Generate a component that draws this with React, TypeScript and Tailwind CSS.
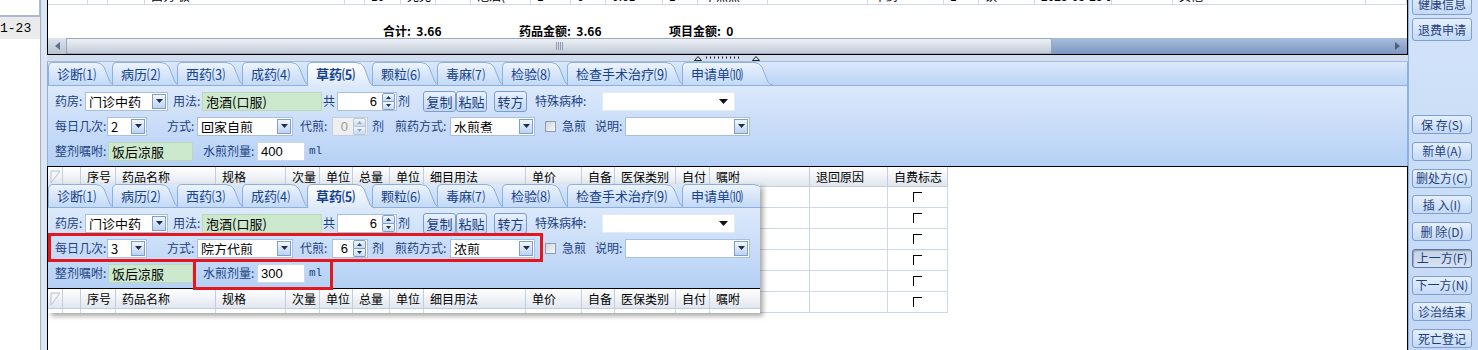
import clsx from "clsx";

const LABEL = "shrink-0 whitespace-nowrap text-[12px] leading-none text-[#1b3f80]";

type Vals = {
  times: string;
  mode: string;
  dai: string;
  daiOn: boolean;
  jian: string;
  amount: string;
};

const TABS = [
  { label: "诊断⑴", w: 64, cls: "w-[64px]" },
  { label: "病历⑵", w: 65, cls: "w-[65px]" },
  { label: "西药⑶", w: 65, cls: "w-[65px]" },
  { label: "成药⑷", w: 65, cls: "w-[65px]" },
  { label: "草药⑸", w: 65, cls: "w-[65px]", active: true },
  { label: "颗粒⑹", w: 65, cls: "w-[65px]" },
  { label: "毒麻⑺", w: 65, cls: "w-[65px]" },
  { label: "检验⑻", w: 65, cls: "w-[65px]" },
  { label: "检查手术治疗⑼", w: 115, cls: "w-[115px]" },
  { label: "申请单⑽", w: 88, cls: "w-[88px]" },
];

const COLS = [
  { t: "", cls: "w-[15px]" },
  { t: "", cls: "w-[18px]" },
  { t: "序号", cls: "w-[35px]" },
  { t: "药品名称", cls: "w-[100px]" },
  { t: "规格", cls: "w-[70px]" },
  { t: "次量", cls: "w-[34px]" },
  { t: "单位", cls: "w-[33px]" },
  { t: "总量", cls: "w-[37px]" },
  { t: "单位", cls: "w-[34px]" },
  { t: "细目用法", cls: "w-[102px]" },
  { t: "单价", cls: "w-[56px]" },
  { t: "自备", cls: "w-[33px]" },
  { t: "医保类别", cls: "w-[61px]" },
  { t: "自付", cls: "w-[34px]" },
  { t: "嘱咐", cls: "w-[100px]" },
  { t: "退回原因", cls: "w-[78px]" },
  { t: "自费标志", cls: "w-[60px]" },
];

// the half-hidden row at the very top of the upper grid
const TOP_ROW = [
  { t: "", cls: "w-[40px]" },
  { t: "", cls: "w-[20px]" },
  { t: "", cls: "w-[37px]" },
  { t: "西秀 极", cls: "w-[200px]" },
  { t: "", cls: "w-[20px]" },
  { t: "10", cls: "w-[36px]" },
  { t: "克克", cls: "w-[35px]" },
  { t: "", cls: "w-[35px]" },
  { t: "泡酒(", cls: "w-[60px]" },
  { t: "1", cls: "w-[40px]" },
  { t: "6", cls: "w-[35px]" },
  { t: "0.61", cls: "w-[57px]" },
  { t: "1", cls: "w-[35px]" },
  { t: "不煎煮", cls: "w-[70px]" },
  { t: "", cls: "w-[100px]" },
  { t: "中药", cls: "w-[76px]" },
  { t: "1", cls: "w-[35px]" },
  { t: "饮", cls: "w-[56px]" },
  { t: "2023-05-25 09:50:26", cls: "w-[77px]" },
  { t: "", cls: "w-[61px]" },
  { t: "其他", cls: "w-[193px]" },
  { t: "", cls: "w-[41px]" },
];

const SIDE = "flex w-[60px] shrink-0 items-center justify-center whitespace-nowrap rounded-[3px] border text-[12px] leading-none text-[#1d3f7c]";
const SIDE_UP = "border-[#7f9fcf] bg-linear-to-b from-[#e6f0fd] to-[#c3d9f6]";
const SIDE_DOWN = "border-[#5b7aa9] bg-linear-to-b from-[#c4d2e6] to-[#d8e3f2] shadow-[inset_1px_1px_1px_rgba(0,0,0,0.25)]";

function Combo({ value, w, plain }: { value: string; w: string; plain?: boolean }) {
  return (
    <div className={clsx("flex h-[19px] shrink-0 items-center border bg-white", plain ? "border-[#e3ebf6]" : "border-[#a9bfdc]", w)}>
      <span className="flex-1 overflow-hidden whitespace-nowrap pl-[3px] text-[13px] leading-none text-black">{value}</span>
      {plain ? (
        <svg className="mr-[6px]" width="9" height="5" viewBox="0 0 9 5">
          <path d="M0 0h9L4.5 5z" fill="#111" />
        </svg>
      ) : (
        <span className="mr-px flex h-[15px] w-[14px] items-center justify-center border border-[#7f9fcb] bg-linear-to-b from-[#f1f6fe] to-[#bcd3f2]">
          <svg width="7" height="4" viewBox="0 0 7 4">
            <path d="M0 0h7L3.5 4z" fill="#1f2d4a" />
          </svg>
        </span>
      )}
    </div>
  );
}

function Spin({ value, w, disabled }: { value: string; w: string; disabled?: boolean }) {
  const c = disabled ? "#9aa6b6" : "#22314f";
  return (
    <div className={clsx("flex h-[19px] shrink-0 items-center border", disabled ? "border-[#c4cfdd] bg-[#efefef] text-[#9a9a9a]" : "border-[#a9bfdc] bg-white text-black", w)}>
      <span className="flex-1 pr-[5px] text-right font-['Liberation_Sans',sans-serif] text-[13px] leading-none">{value}</span>
      <span className="mr-px flex h-[17px] w-[13px] flex-col">
        <span className={clsx("flex flex-1 items-center justify-center rounded-t-[2px] border bg-linear-to-b from-[#f1f6fe] to-[#c6daf4]", disabled ? "border-[#b9c5d4]" : "border-[#7f9fcb]")}>
          <svg width="5" height="3" viewBox="0 0 5 3">
            <path d="M0 3h5L2.5 0z" fill={c} />
          </svg>
        </span>
        <span className={clsx("flex flex-1 items-center justify-center rounded-b-[2px] border border-t-0 bg-linear-to-b from-[#f1f6fe] to-[#c6daf4]", disabled ? "border-[#b9c5d4]" : "border-[#7f9fcb]")}>
          <svg width="5" height="3" viewBox="0 0 5 3">
            <path d="M0 0h5L2.5 3z" fill={c} />
          </svg>
        </span>
      </span>
    </div>
  );
}

function Field({ value, w, green }: { value: string; w: string; green?: boolean }) {
  return (
    <div className={clsx("flex h-[19px] shrink-0 items-center whitespace-nowrap border pl-[3px] text-[13px] leading-none text-black", green ? "border-[#bcd8bc] bg-[#cde9cd]" : "border-[#c9d8ea] bg-white font-['Liberation_Sans',sans-serif]", w)}>
      {value}
    </div>
  );
}

function Btn({ label, w, extra }: { label: string; w: string; extra?: string }) {
  return (
    <div className={clsx("flex h-[21px] shrink-0 items-center justify-center rounded-[3px] border border-[#7b9dcc] bg-linear-to-b from-[#e9f1fd] to-[#c2d7f4] text-[13px] leading-none text-[#1b3f80]", w, extra)}>
      {label}
    </div>
  );
}

function Tab({ label, w, cls, active }: { label: string; w: number; cls: string; active?: boolean }) {
  const h = active ? 24 : 23;
  const edge = `M0.5 ${h} V5 Q0.5 0.5 5 0.5 H${w - 16} Q${w - 11} 0.5 ${w - 8} 5 L${w - 2} ${h - 3} Q${w} ${h} ${w + 3} ${h}`;
  const id = active ? "tabOn" : "tabOff";
  return (
    <div className={clsx("relative flex shrink-0 items-center", active ? "z-10 -mb-px h-[24px] pb-px" : "h-[23px]", cls)}>
      <svg className="absolute left-0 top-0 overflow-visible" width={w} height={h}>
        <defs>
          <linearGradient id={id} x1="0" y1="0" x2="0" y2="1">
            <stop offset="0" stopColor={active ? "#ffffff" : "#edf4fd"} />
            <stop offset="1" stopColor={active ? "#dce9fb" : "#c3d9f6"} />
          </linearGradient>
        </defs>
        <path d={edge + " Z"} fill={`url(#${id})`} />
        <path d={edge} fill="none" stroke="#8db0dd" />
      </svg>
      <span className={clsx("relative whitespace-nowrap pl-[9px] text-[13px] leading-none text-[#15428b]", active && "font-bold")}>{label}</span>
    </div>
  );
}

function HerbPanel({ v }: { v: Vals }) {
  return (
    <div className="flex flex-col">
      <div className="flex h-[24px] items-end border-b border-[#8db0dd] bg-linear-to-b from-[#dae8fb] to-[#bcd5f6]">
        {TABS.map((t) => (
          <Tab key={t.label} {...t} />
        ))}
      </div>
      <div className="flex h-[80px] flex-col gap-[5px] bg-linear-to-b from-[#dce9fb] to-[#b5d0f5] pl-[7px] pt-[5px]">
        <div className="flex h-[20px] items-center">
          <span className={clsx(LABEL, "w-[30px]")}>药房:</span>
          <Combo value="门诊中药" w="w-[83px]" />
          <span className={clsx(LABEL, "ml-[5px] w-[29px]")}>用法:</span>
          <Field green value="泡酒(口服)" w="w-[120px]" />
          <span className={clsx(LABEL, "ml-[1px] w-[14px]")}>共</span>
          <Spin value="6" w="w-[60px]" />
          <span className={clsx(LABEL, "ml-[1px] w-[25px]")}>剂</span>
          <Btn label="复制" w="w-[33px]" />
          <Btn label="粘贴" w="w-[31px]" />
          <Btn label="转方" w="w-[33px]" extra="ml-[7px]" />
          <span className={clsx(LABEL, "ml-[8px] w-[67px]")}>特殊病种:</span>
          <Combo plain value="" w="w-[133px]" />
        </div>
        <div className="flex h-[20px] items-center">
          <span className={clsx(LABEL, "w-[52px]")}>每日几次:</span>
          <Combo value={v.times} w="w-[40px]" />
          <span className={clsx(LABEL, "ml-[20px] w-[30px]")}>方式:</span>
          <Combo value={v.mode} w="w-[96px]" />
          <span className={clsx(LABEL, "ml-[7px] w-[32px]")}>代煎:</span>
          <Spin value={v.dai} w="w-[36px]" disabled={!v.daiOn} />
          <span className={clsx(LABEL, "ml-[4px] w-[23px]")}>剂</span>
          <span className={clsx(LABEL, "w-[55px]")}>煎药方式:</span>
          <Combo value={v.jian} w="w-[85px]" />
          <span className="ml-[10px] h-[11px] w-[11px] shrink-0 border border-[#8e9cb2] bg-linear-to-br from-[#d2d5da] to-[#f8f8f8]" />
          <span className={clsx(LABEL, "ml-[6px] w-[27px]")}>急煎</span>
          <span className={clsx(LABEL, "ml-[6px] w-[30px]")}>说明:</span>
          <Combo value="" w="w-[125px]" />
        </div>
        <div className="flex h-[20px] items-center">
          <span className={clsx(LABEL, "w-[53px]")}>整剂嘱咐:</span>
          <Field green value="饭后凉服" w="w-[85px]" />
          <span className={clsx(LABEL, "ml-[10px] w-[54px]")}>水煎剂量:</span>
          <Field value={v.amount} w="w-[48px]" />
          <span className="ml-[4px] font-['Liberation_Mono',monospace] text-[11px] leading-none text-[#1b3f80]">ml</span>
        </div>
      </div>
    </div>
  );
}

function GridHeader() {
  return (
    <div className="flex h-[20px]">
      {COLS.map((c, i) => (
        <div
          key={i}
          className={clsx(
            "flex shrink-0 items-center whitespace-nowrap border-b border-r border-[#c3cedd] bg-linear-to-b from-[#ffffff] to-[#e1e6ee] text-[12px] leading-none text-black",
            i === 0 ? "justify-center" : "pl-[6px]",
            c.cls
          )}
        >
          {i === 0 ? (
            <svg width="11" height="14" viewBox="0 0 11 14">
              <path d="M1 1h9L1 13z" fill="#f4f6f9" stroke="#b7c1cf" />
            </svg>
          ) : (
            c.t
          )}
        </div>
      ))}
    </div>
  );
}

function GridRow() {
  return (
    <div className="flex h-[21px]">
      {COLS.map((c, i) => (
        <div key={i} className={clsx("flex shrink-0 items-center justify-center border-b border-r border-[#cdd8e7]", c.cls)}>
          {i === COLS.length - 1 && <span className="h-[10px] w-[9px] border-l border-t border-black" />}
        </div>
      ))}
    </div>
  );
}

export default function App() {
  const mainVals: Vals = { times: "2", mode: "回家自煎", dai: "0", daiOn: false, jian: "水煎煮", amount: "400" };
  const insetVals: Vals = { times: "3", mode: "院方代煎", dai: "6", daiOn: true, jian: "浓煎", amount: "300" };

  return (
    <div className="relative flex h-[350px] w-[1478px] overflow-hidden bg-white font-['Noto_Sans_CJK_SC',sans-serif]">
      {/* left list edge */}
      <div className="flex w-[47px] shrink-0">
        <div className="flex w-[40px] flex-col">
          <div className="h-[17px] border-b-2 border-r border-[#a9bbd3] bg-white" />
          <div className="flex h-[22px] items-center bg-[#ebebeb] font-['Liberation_Mono',monospace] text-[13px] leading-none text-black">1-23</div>
          <div className="flex-1 bg-white" />
        </div>
        <div className="w-[7px] border-l border-[#9fb2cc] bg-[#dce6f3]" />
      </div>

      {/* main */}
      <div className="flex w-[1361px] shrink-0 flex-col">
        <div className="flex h-[55px] flex-col border-x border-b border-black bg-white">
          <div className="h-[5px] overflow-hidden border-b border-[#cfd9e8]">
            <div className="-mt-[13px] flex h-[17px]">
              {TOP_ROW.map((c, i) => (
                <div key={i} className={clsx("flex shrink-0 items-center overflow-hidden whitespace-nowrap border-r border-[#cfd9e8] pl-[6px] text-[12px] leading-none text-black", c.cls)}>
                  {c.t}
                </div>
              ))}
            </div>
          </div>
          <div className="flex h-[33px] items-end pb-[1px] pl-[335px] text-[12px] font-bold leading-none text-black">
            <span className="w-[136px] whitespace-pre">合计:  3.66</span>
            <span className="w-[150px] whitespace-pre">药品金额:  3.66</span>
            <span className="whitespace-pre">项目金额:  0</span>
          </div>
          <div className="flex h-[16px] bg-linear-to-b from-[#a9bddb] to-[#7c97c2]">
            <div className="flex w-[18px] items-center justify-center bg-linear-to-b from-[#dde4ec] to-[#b8c3d2]">
              <svg width="5" height="8" viewBox="0 0 5 8">
                <path d="M5 0v8L0 4z" fill="#5d6f8f" />
              </svg>
            </div>
            <div className="flex w-[986px] items-center justify-center rounded-[2px] border border-[#98a8be] bg-linear-to-b from-[#eef1f5] to-[#c2cbd7]">
              <svg width="7" height="8" viewBox="0 0 7 8">
                <path d="M0.5 0v8M2.5 0v8M4.5 0v8M6.5 0v8" stroke="#8f9db2" />
              </svg>
            </div>
            <div className="flex-1" />
            <div className="flex w-[12px] items-center justify-start">
              <svg width="5" height="8" viewBox="0 0 5 8">
                <path d="M0 0v8L5 4z" fill="#4f5f7d" />
              </svg>
            </div>
          </div>
        </div>

        {/* splitter */}
        <div className="flex h-[7px] items-end border-b border-[#a9bdd8] bg-[#d3deee] pl-[647px]">
          <svg width="66" height="5" viewBox="0 0 66 5">
            <path d="M0.5 4.5h7L4 0.5z" fill="none" stroke="#222" />
            <path d="M12 1.5h1M16 1.5h1M20 1.5h1M24 1.5h1M28 1.5h1M32 1.5h1M36 1.5h1M40 1.5h1M44 1.5h1" stroke="#222" strokeWidth="2" />
            <path d="M58.5 4.5h7L62 0.5z" fill="none" stroke="#222" />
          </svg>
        </div>

        <div className="border-x border-[#8db0dd]">
          <HerbPanel v={mainVals} />
        </div>

        <div className="flex flex-1 flex-col border-x border-t border-black bg-white">
          <GridHeader />
          {[0, 1, 2, 3, 4, 5].map((i) => (
            <GridRow key={i} />
          ))}
        </div>
      </div>

      {/* right command bar */}
      <div className="flex w-[70px] shrink-0 flex-col border-l border-[#8fb1de] bg-linear-to-b from-[#d2e3f9] to-[#c3d8f5] pl-[3px]">
        <div className={clsx(SIDE, SIDE_UP, "-mt-[8px] h-[23px]")}>健康信息</div>
        <div className={clsx(SIDE, SIDE_UP, "mt-[3px] h-[23px]")}>退费申请</div>
        <div className="mt-[74px] flex flex-col gap-[7.75px]">
          <div className={clsx(SIDE, SIDE_UP, "h-[19px]")}>保 存(S)</div>
          <div className={clsx(SIDE, SIDE_UP, "h-[19px]")}>新单(A)</div>
          <div className={clsx(SIDE, SIDE_UP, "h-[19px]")}>删处方(C)</div>
          <div className={clsx(SIDE, SIDE_UP, "h-[19px]")}>插 入(I)</div>
          <div className={clsx(SIDE, SIDE_UP, "h-[19px]")}>删 除(D)</div>
          <div className={clsx(SIDE, SIDE_DOWN, "h-[19px]")}>上一方(F)</div>
          <div className={clsx(SIDE, SIDE_UP, "h-[19px]")}>下一方(N)</div>
          <div className={clsx(SIDE, SIDE_UP, "h-[19px]")}>诊治结束</div>
          <div className={clsx(SIDE, SIDE_UP, "h-[19px]")}>死亡登记</div>
        </div>
      </div>

      {/* pasted screenshot of the edited panel */}
      <div className="absolute left-[48px] top-[184px] h-[129px] w-[712px] overflow-hidden bg-white shadow-[3px_3px_5px_rgba(0,0,0,0.35)]">
        <div className="w-[1359px]">
          <HerbPanel v={insetVals} />
          <div className="border-t border-black bg-white">
            <GridHeader />
            <GridRow />
          </div>
        </div>
        <div className="absolute left-0 top-[49px] h-[29px] w-[495px] border-[3px] border-[#e3171e]" />
        <div className="absolute left-[145px] top-[75px] h-[31px] w-[140px] border-[3px] border-[#e3171e]" />
      </div>
    </div>
  );
}
